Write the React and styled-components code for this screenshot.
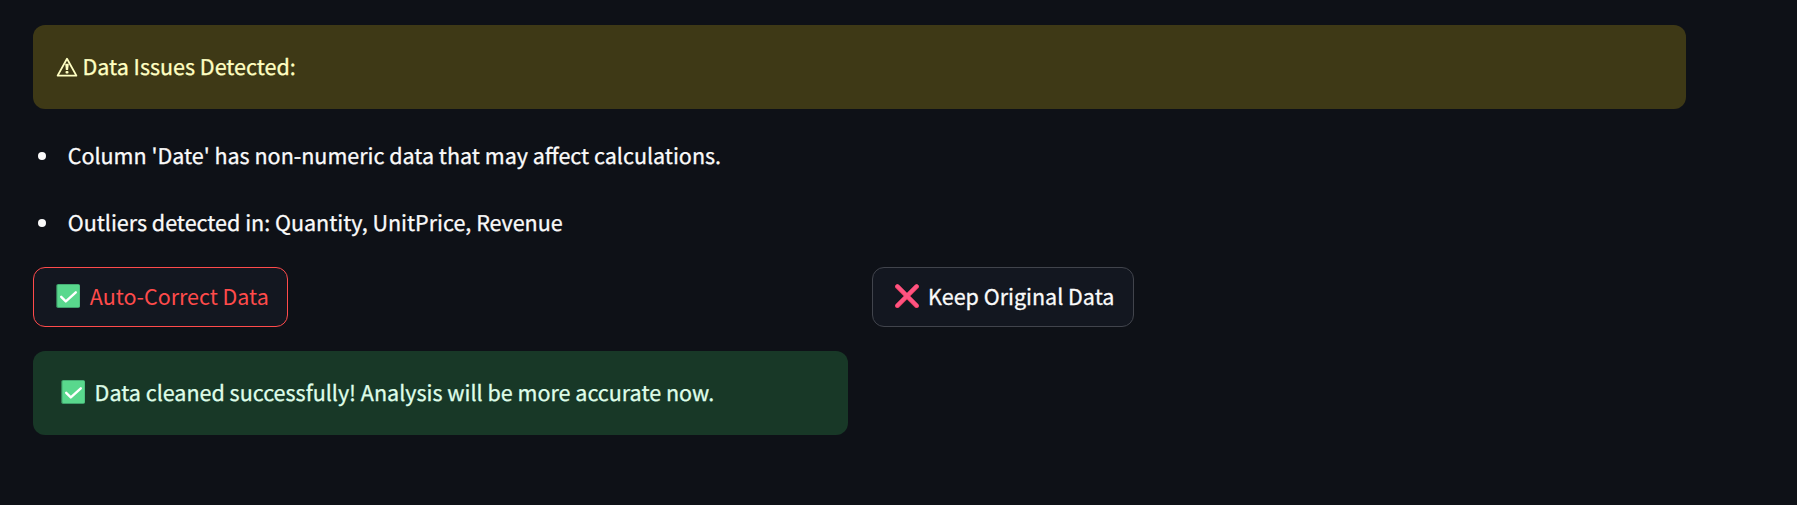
import React from 'react';
import styled, { createGlobalStyle } from 'styled-components';

const GlobalStyle = createGlobalStyle`
  * { box-sizing: border-box; }
  body {
    margin: 0;
    background: #0e1117;
    color: #fafafa;
    font-family: "Noto Sans CJK SC", "Noto Sans", sans-serif;
    font-size: 21.5px;
    line-height: 36px;
    text-rendering: geometricPrecision;
    -webkit-text-stroke: 0.3px currentColor;
  }
`;

const Page = styled.main`
  width: 1686px;
  min-height: 505px;
  padding: 25px 0 0 33px;
`;

const Alert = styled.div`
  display: flex;
  align-items: center;
  height: 84px;
  padding: 0 23px;
  border-radius: 12px;
  white-space: nowrap;
  background: ${(p) => (p.$kind === 'warning' ? '#3e3916' : '#183827')};
  color: ${(p) => (p.$kind === 'warning' ? '#ffffc2' : '#dffde9')};
`;

const SuccessAlert = styled(Alert)`
  padding-left: 28px;
`;

const IssueList = styled.ul`
  list-style: none;
  margin: 29px 0 26px;
  padding: 0;
  display: flex;
  flex-direction: column;
  gap: 31px;
`;

const Issue = styled.li`
  display: flex;
  align-items: center;
  height: 36px;
  padding-left: 5px;
  white-space: nowrap;

  &::before {
    content: '';
    width: 8px;
    height: 8px;
    margin-right: 21.7px;
    border-radius: 50%;
    background: #fafafa;
  }
`;

const Columns = styled.div`
  display: grid;
  grid-template-columns: 815px 815px;
  column-gap: 24px;
`;

const Column = styled.div`
  display: flex;
  flex-direction: column;
  align-items: flex-start;
  gap: 24px;

  & > ${Alert} { align-self: stretch; }
`;

const Icon = styled.svg`
  display: block;
  flex: none;
  width: 24px;
  height: 24px;
  margin-bottom: 2px;
`;

const Label = styled.span`
  margin-left: ${(p) => p.$gap}px;
  letter-spacing: ${(p) => p.$track || 0}px;
`;

const Button = styled.button`
  display: flex;
  align-items: center;
  width: ${(p) => p.$width}px;
  height: 60px;
  padding: 0 0 0 22px;
  border: 1px solid ${(p) => (p.$active ? '#ff4b4b' : '#41444c')};
  border-radius: 12px;
  background: #131720;
  color: ${(p) => (p.$active ? '#ff4b4b' : '#fafafa')};
  font: inherit;
  white-space: nowrap;
  -webkit-text-stroke: ${(p) => (p.$active ? '0' : '0.3px currentColor')};

  ${Label} { padding-bottom: 2px; }
`;

const WarningIcon = styled(Icon)`
  width: 22px;
  height: 20px;
  margin-bottom: 1px;
`;

function WarningMark() {
  return (
    <WarningIcon viewBox="0 0 22 20" fill="none">
      <path d="M11 1.8 20.4 18.6H1.6Z" stroke="currentColor" strokeWidth="1.8" strokeLinejoin="round" />
      <path d="M9.2 6.8h3.6l-.7 6.2H9.9Z" fill="currentColor" />
      <rect x="9.5" y="14" width="3" height="2.6" rx="1" fill="currentColor" />
    </WarningIcon>
  );
}

function CheckMark() {
  return (
    <Icon viewBox="0 0 24 24" fill="none">
      <rect x="0.3" width="23.7" height="24" rx="1.8" fill="#3fa16c" />
      <rect x="1.4" y="0.7" width="22.2" height="22.3" rx="1.2" fill="#59d88d" />
      <path d="m5.2 12.8 4.6 4.6L19.8 8.3" stroke="#fff" strokeWidth="2.4" strokeLinecap="round" strokeLinejoin="round" />
    </Icon>
  );
}

function CrossMark() {
  return (
    <Icon viewBox="0 0 24 24" fill="none" strokeLinecap="round">
      <path d="m2.4 2.6 19.2 19.2m0-19.2L2.4 21.8" stroke="#e33c58" strokeWidth="4.6" />
      <path d="m2.4 2.2 19.2 19.2m0-19.2L2.4 21.4" stroke="#ff5381" strokeWidth="3.8" />
    </Icon>
  );
}

export default function App() {
  return (
    <>
      <GlobalStyle />
      <Page>
        <Alert $kind="warning">
          <WarningMark />
          <Label $gap={4.5}>Data Issues Detected:</Label>
        </Alert>
        <IssueList>
          <Issue>Column 'Date' has non-numeric data that may affect calculations.</Issue>
          <Issue>Outliers detected in: Quantity, UnitPrice, Revenue</Issue>
        </IssueList>
        <Columns>
          <Column>
            <Button $active $width={255}>
              <CheckMark />
              <Label $gap={9.8} $track={-0.03}>Auto-Correct Data</Label>
            </Button>
            <SuccessAlert $kind="success">
              <CheckMark />
              <Label $gap={9.6}>Data cleaned successfully! Analysis will be more accurate now.</Label>
            </SuccessAlert>
          </Column>
          <Column>
            <Button $width={262}>
              <CrossMark />
              <Label $gap={9}>Keep Original Data</Label>
            </Button>
          </Column>
        </Columns>
      </Page>
    </>
  );
}
